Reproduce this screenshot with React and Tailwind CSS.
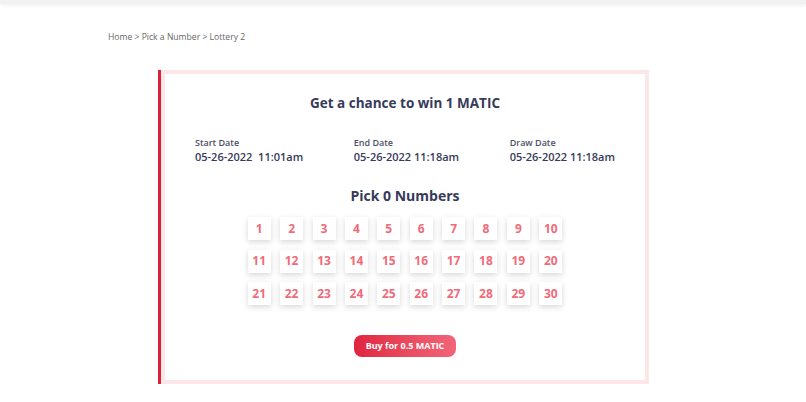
const dates = [
  { label: "Start Date", value: "05-26-2022  11:01am" },
  { label: "End Date", value: "05-26-2022 11:18am" },
  { label: "Draw Date", value: "05-26-2022 11:18am" },
];

const numbers = Array.from({ length: 30 }, (_, i) => i + 1);

export default function App() {
  return (
    <div className="min-h-screen bg-white font-['Open_Sans','Lato',sans-serif]">
      {/* top bar */}
      <div className="h-[4px] bg-[#f1f1f1] shadow-[0_1px_4px_rgba(0,0,0,0.08)]" />

      {/* breadcrumb */}
      <div className="pl-[108px] pt-[27px] text-[8.6px] leading-[12px] text-[#666]">
        Home &gt; Pick a Number &gt; Lottery 2
      </div>

      {/* lottery card */}
      <div className="ml-[158px] mt-[27px] w-[491px] border-l-[3px] border-[#dc1f3a]">
        <div className="h-[314px] border-4 border-[#fde6e7] px-[30px] flex flex-col items-center text-[#373a59]">
          <h1 className="mt-[19px] text-[13.5px] leading-[20px] font-bold">
            Get a chance to win 1 MATIC
          </h1>

          <div className="w-full flex justify-between mt-[23px]">
            {dates.map((d) => (
              <div key={d.label}>
                <p className="text-[9px] leading-[13px] font-semibold text-[#4d5068]">{d.label}</p>
                <p className="text-[11px] leading-[16px] font-semibold whitespace-pre">{d.value}</p>
              </div>
            ))}
          </div>

          <h2 className="mt-[21px] text-[14px] leading-[20px] font-bold">Pick 0 Numbers</h2>

          <div className="mt-[11px] grid grid-cols-10 gap-x-[9.4px] gap-y-[9.5px]">
            {numbers.map((n) => (
              <button
                key={n}
                className="w-[23px] h-[23px] bg-white flex items-center justify-center text-[12px] font-bold text-[#ef6b7a] shadow-[0_2px_6px_rgba(0,0,0,0.16)]"
              >
                {n}
              </button>
            ))}
          </div>

          <button className="mt-[30px] w-[102px] h-[22px] rounded-[8px] bg-gradient-to-r from-[#e0233f] to-[#f2647a] text-white text-[9px] font-bold">
            Buy for 0.5 MATIC
          </button>
        </div>
      </div>
    </div>
  );
}
